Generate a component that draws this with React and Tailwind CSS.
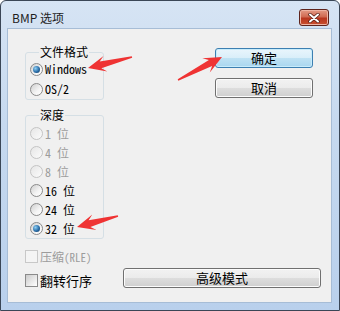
import React from "react";

const CJK = "font-['Noto_Sans_CJK_SC','Noto_Sans',sans-serif]";
const MONO = "font-['Noto_Sans_Mono_CJK_SC','Liberation_Mono','Noto_Sans_CJK_SC',monospace]";

function arrowPoints(tip, tail, headLen, headW, neckW, tailW) {
  const dx = tail[0] - tip[0];
  const dy = tail[1] - tip[1];
  const L = Math.hypot(dx, dy);
  const ux = dx / L, uy = dy / L;
  const nx = -uy, ny = ux;
  const p = (a, b) => [tip[0] + ux * a + nx * b, tip[1] + uy * a + ny * b];
  const pts = [
    tip,
    p(headLen, headW / 2),
    p(headLen * 0.72, neckW / 2),
    p(L, tailW / 2),
    p(L, -tailW / 2),
    p(headLen * 0.72, -neckW / 2),
    p(headLen, -headW / 2),
  ];
  return pts.map((q) => q[0].toFixed(1) + "," + q[1].toFixed(1)).join(" ");
}

function Radio({ checked, disabled }) {
  return (
    <span
      className={
        "relative flex items-center justify-center w-[13px] h-[13px] rounded-full border shrink-0 " +
        (disabled
          ? "border-[#c4c4c4] bg-[linear-gradient(135deg,#e6e6e6,#fbfbfb)]"
          : "border-[#8a8a8a] bg-[linear-gradient(135deg,#cfcfcf,#f4f4f4_60%,#ffffff)]")
      }
    >
      {checked && (
        <span className="w-[7px] h-[7px] rounded-full bg-[radial-gradient(circle_at_35%_35%,#8fd0f5,#2a6ea8_55%,#0b2d52)]" />
      )}
    </span>
  );
}

function Check({ disabled }) {
  return (
    <span
      className={
        "w-[13px] h-[13px] border shrink-0 " +
        (disabled
          ? "border-[#c8c8c8] bg-[#f4f4f4]"
          : "border-[#8a8a8a] bg-[linear-gradient(135deg,#cbcbcb,#f0f0f0_70%,#ffffff)]")
      }
    />
  );
}

function RadioRow({ label, checked, disabled, h }) {
  return (
    <div className={"flex items-center pl-[4px] gap-[2px] " + h}>
      <Radio checked={checked} disabled={disabled} />
      <span
        className={
          MONO +
          " text-[12px] leading-[14px] whitespace-pre " +
          (disabled ? "text-[#9c9c9c]" : "text-[#000000]")
        }
      >
        {label}
      </span>
    </div>
  );
}

function Button({ children, def, className }) {
  return (
    <div
      className={
        "flex items-center justify-center h-[20px] rounded-[3px] border " +
        CJK +
        " text-[13px] leading-[14px] text-black " +
        (def
          ? "border-[#3c7fb1] bg-[linear-gradient(#e9f5fc,#d9eef9_50%,#bfe2f4_51%,#a9d6ef)] shadow-[inset_0_0_0_1px_#c8ecfb]"
          : "border-[#707070] bg-[linear-gradient(#f2f2f2,#ebebeb_50%,#dddddd_51%,#cfcfcf)] shadow-[inset_0_0_0_1px_#fcfcfc]") +
        " " +
        (className || "")
      }
    >
      {children}
    </div>
  );
}

export default function App() {
  return (
    <div className="relative w-[340px] h-[311px] bg-white overflow-hidden">
      <div className="flex flex-col w-[340px] h-[311px] border border-[#3a4656] rounded-t-[6px] bg-[linear-gradient(#d6e4f4,#c6d9ef_40%,#b9d0ec)]">
        {/* title bar */}
        <div className="flex items-start justify-between h-[28px] pl-[11px] pr-[10px]">
          <span className={CJK + " mt-[9px] text-[12px] leading-[16px] text-[#1e1e1e]"}>
            BMP 选项
          </span>
          <div className="mt-[8px] flex items-center justify-center w-[30px] h-[17px] rounded-[3px] border border-[#5e241c] bg-[linear-gradient(#e39a85,#d06a52_45%,#b8361f_55%,#c9502f)] shadow-[inset_0_0_0_1px_#eeb3a3]">
            <svg width="12" height="10" viewBox="0 0 12 10">
              <path d="M2 1.5 L10 8.5 M10 1.5 L2 8.5" stroke="#4f1a12" strokeWidth="3.4" strokeLinecap="round" />
              <path d="M2 1.5 L10 8.5 M10 1.5 L2 8.5" stroke="#ffffff" strokeWidth="2" strokeLinecap="round" />
            </svg>
          </div>
        </div>
        {/* content */}
        <div className="flex-1 ml-[7px] mr-[8px] mb-[8px] bg-[#f0f0f0] shadow-[0_0_0_1px_#a7bdd6] flex flex-col">
          <div className="flex">
            <div className="pl-[17px] pt-[23px] flex flex-col">
              <div className="relative w-[79px] h-[48px] border border-[#d5dfe5] rounded-[3px] pt-[6px]">
                <span className={CJK + " absolute left-[13px] -top-[8px] px-[1px] bg-[#f0f0f0] text-[12px] leading-[14px] text-black"}>
                  文件格式
                </span>
                <RadioRow label="Windows" checked h="h-[20px]" />
                <RadioRow label="OS/2" h="h-[20px]" />
              </div>
              <div className="relative mt-[15px] w-[79px] h-[124px] border border-[#d5dfe5] rounded-[3px] pt-[8px]">
                <span className={CJK + " absolute left-[13px] -top-[8px] px-[1px] bg-[#f0f0f0] text-[12px] leading-[14px] text-black"}>
                  深度
                </span>
                <RadioRow label="1 位" disabled h="h-[19px]" />
                <RadioRow label="4 位" disabled h="h-[19px]" />
                <RadioRow label="8 位" disabled h="h-[19px]" />
                <RadioRow label="16 位" h="h-[19px]" />
                <RadioRow label="24 位" h="h-[19px]" />
                <RadioRow label="32 位" checked h="h-[19px]" />
              </div>
            </div>
            <div className="ml-[111px] pt-[19px] flex flex-col">
              <Button def className="w-[98px]">确定</Button>
              <Button className="w-[98px] mt-[10px]">取消</Button>
            </div>
          </div>
          <div className="mt-[8px] h-[19px] pl-[17px] flex items-center gap-[2px]">
            <Check disabled />
            <span className={CJK + " text-[12px] leading-[14px] text-[#9c9c9c]"}>
              压缩<span className={MONO + " text-[11px]"}>(RLE)</span>
            </span>
          </div>
          <div className="mt-[2px] flex items-start">
            <div className="mt-[3px] h-[19px] pl-[17px] flex items-center gap-[2px]">
              <Check />
              <span className={CJK + " text-[13px] leading-[14px] text-black"}>翻转行序</span>
            </div>
            <Button className="ml-auto mr-[10px] w-[198px]">高级模式</Button>
          </div>
        </div>
      </div>
      {/* red annotation arrows */}
      <svg className="absolute left-0 top-0 pointer-events-none" width="340" height="311" viewBox="0 0 340 311">
        <polygon points={arrowPoints([88, 68], [132, 57], 18, 16, 7, 1.5)} fill="#ef3333" />
        <polygon points={arrowPoints([222, 57], [178, 80], 18, 16, 7, 1.5)} fill="#ef3333" />
        <polygon points={arrowPoints([77, 227], [118, 216], 18, 16, 7, 1.5)} fill="#ef3333" />
      </svg>
    </div>
  );
}
